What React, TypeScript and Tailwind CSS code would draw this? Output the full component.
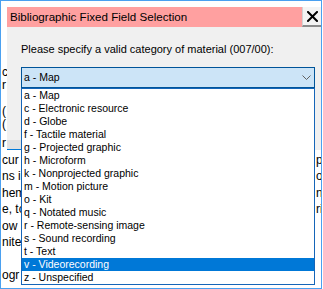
import React from 'react';

const materials = [
  'a - Map',
  'c - Electronic resource',
  'd - Globe',
  'f - Tactile material',
  'g - Projected graphic',
  'h - Microform',
  'k - Nonprojected graphic',
  'm - Motion picture',
  'o - Kit',
  'q - Notated music',
  'r - Remote-sensing image',
  's - Sound recording',
  't - Text',
  'v - Videorecording',
  'z - Unspecified',
];

// text of the window lying behind the dialog, only slivers of it show
const bgRows = [
  { h: 'h-[13px] leading-[13px]', left: 'c', right: '' },
  { h: 'h-[13px] leading-[13px]', left: 'r', right: '' },
  { h: 'h-[13px] leading-[13px]', left: '', right: '' },
  { h: 'h-[13px] leading-[13px]', left: '(', right: '' },
  { h: 'h-[13px] leading-[13px]', left: '(', right: '' },
  { h: 'h-[4px] leading-[4px]', left: '', right: '' },
  { h: 'h-[16.5px] leading-[16.5px]', left: 'r', right: '' },
  { h: 'h-[16.5px] leading-[16.5px]', left: 'cur', right: 'p' },
  { h: 'h-[16.5px] leading-[16.5px]', left: 'ns in', right: 'o' },
  { h: 'h-[16.5px] leading-[16.5px]', left: 'hem', right: 'nt' },
  { h: 'h-[16.5px] leading-[16.5px]', left: 'e, to', right: 'ri' },
  { h: 'h-[16.5px] leading-[16.5px]', left: 'ow', right: '' },
  { h: 'h-[16.5px] leading-[16.5px]', left: 'nite', right: '' },
  { h: 'h-[16.5px] leading-[16.5px]', left: '', right: '' },
  { h: 'h-[16.5px] leading-[16.5px]', left: 'ogr', right: '' },
];

const App: React.FC = () => {
  const selected = 'v - Videorecording';

  return (
    <div className="w-[323px] h-[289px] bg-white text-black font-['Liberation_Sans',Arial,sans-serif]">
      <div className="relative w-[322px] h-[289px] border border-[#4aa0f0] overflow-hidden bg-white">
        {/* Background window */}
        <div className="flex flex-col pt-[65px] text-[12px] whitespace-nowrap">
          {bgRows.map((row, i) => (
            <div key={i} className={`flex ${row.h}`}>
              <span className="w-[315px] shrink-0 pl-[1px]">{row.left}</span>
              <span>{row.right}</span>
            </div>
          ))}
        </div>

        {/* Dialog */}
        <div className="absolute left-[6px] top-[6px] w-[314px] h-[143px] flex flex-col">
          <div className="flex h-[20px] shrink-0">
            <div className="flex-1 flex items-center pl-[3px] bg-[#ffa0a0] text-[11.6px] whitespace-nowrap">
              Bibliographic Fixed Field Selection
            </div>
            <button
              type="button"
              className="w-[19px] h-[20px] flex items-center justify-center bg-[#f4f4f4] border-l border-[#d4d4d4] border-b-2 border-b-[#8c8c8c]"
            >
              <svg width="11" height="11" viewBox="0 0 11 11">
                <path d="M1 1 L10 10 M10 1 L1 10" stroke="#000" strokeWidth={2} strokeLinecap="square" fill="none" />
              </svg>
            </button>
          </div>

          <div className="flex-1 flex flex-col bg-[#f0f0f0]">
            <div className="pl-[14px] pt-[16px] text-[11px] leading-[13px] whitespace-nowrap">
              Please specify a valid category of material (007/00):
            </div>

            <div className="relative ml-[14px] mt-[11px] w-[294px] h-[21px] flex items-center justify-between pl-[2px] pr-[3px] bg-[#cce4f7] border border-[#005499] text-[10.5px]">
              <span>a - Map</span>
              <svg width="9" height="5" viewBox="0 0 9 5">
                <polyline points="0.5,0.5 4.5,4.5 8.5,0.5" stroke="#606060" strokeWidth={1} fill="none" />
              </svg>

              <ul className="absolute left-[-1px] top-[20px] z-10 w-[294px] h-[197px] bg-white border border-[#1565b8]">
                {materials.map(m => (
                  <li
                    key={m}
                    className={`h-[13px] leading-[13px] pl-[2px] whitespace-nowrap ${
                      m === selected ? 'bg-[#0078d7] text-white' : ''
                    }`}
                  >
                    {m}
                  </li>
                ))}
              </ul>
            </div>

            <div className="mt-auto w-[75px] h-[10px] bg-[#e1e1e1] border-b border-[#0078d7]" />
          </div>
        </div>
      </div>
    </div>
  );
};

export default App;
